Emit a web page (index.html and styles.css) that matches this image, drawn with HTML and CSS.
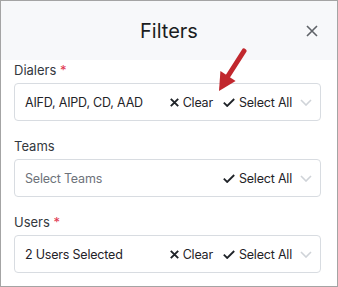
FILE: index.html
```html
<!DOCTYPE html>
<html lang="en">
<head>
  <meta charset="UTF-8">
  <title>Filters</title>
  <link rel="stylesheet" href="styles.css">
</head>
<body>
  <div class="modal">
    <div class="modal-header">
      <h2>Filters</h2>
      <button class="close" aria-label="Close">
        <svg width="12" height="12" viewBox="0 0 12 12"><path d="M1 1L11 11M11 1L1 11" stroke="#5f6368" stroke-width="1.6" fill="none"/></svg>
      </button>
    </div>

    <div class="modal-body">
      <div class="field">
        <label>Dialers <span class="req">*</span></label>
        <div class="select">
          <span class="value">AIFD, AIPD, CD, AAD</span>
          <span class="action"><svg class="x" width="9" height="9" viewBox="0 0 9 9"><path d="M0.8 0.8L8.2 8.2M8.2 0.8L0.8 8.2" stroke="#1f2328" stroke-width="1.9" fill="none"/></svg>Clear</span>
          <span class="action"><svg class="check" width="12" height="9" viewBox="0 0 12 9"><path d="M0.8 4.6L4.2 8L11.2 1" stroke="#1f2328" stroke-width="1.8" fill="none"/></svg>Select All</span>
          <svg class="chevron" width="12" height="7" viewBox="0 0 12 7"><path d="M1 1L6 6L11 1" stroke="#cfd3d8" stroke-width="1.6" fill="none"/></svg>
        </div>
      </div>

      <div class="field">
        <label>Teams</label>
        <div class="select">
          <span class="value placeholder">Select Teams</span>
          <span class="action"><svg class="check" width="12" height="9" viewBox="0 0 12 9"><path d="M0.8 4.6L4.2 8L11.2 1" stroke="#1f2328" stroke-width="1.8" fill="none"/></svg>Select All</span>
          <svg class="chevron" width="12" height="7" viewBox="0 0 12 7"><path d="M1 1L6 6L11 1" stroke="#cfd3d8" stroke-width="1.6" fill="none"/></svg>
        </div>
      </div>

      <div class="field">
        <label>Users <span class="req">*</span></label>
        <div class="select">
          <span class="value">2 Users Selected</span>
          <span class="action"><svg class="x" width="9" height="9" viewBox="0 0 9 9"><path d="M0.8 0.8L8.2 8.2M8.2 0.8L0.8 8.2" stroke="#1f2328" stroke-width="1.9" fill="none"/></svg>Clear</span>
          <span class="action"><svg class="check" width="12" height="9" viewBox="0 0 12 9"><path d="M0.8 4.6L4.2 8L11.2 1" stroke="#1f2328" stroke-width="1.8" fill="none"/></svg>Select All</span>
          <svg class="chevron" width="12" height="7" viewBox="0 0 12 7"><path d="M1 1L6 6L11 1" stroke="#cfd3d8" stroke-width="1.6" fill="none"/></svg>
        </div>
      </div>
    </div>

    <!-- callout arrow pointing at the Clear button -->
    <svg class="callout" width="34" height="50" viewBox="0 0 34 50">
      <line x1="29" y1="6" x2="13" y2="31" stroke="#c1272d" stroke-width="5" stroke-linecap="round"/>
      <polygon points="4,46 5.4,26 20.6,36" fill="#c1272d"/>
    </svg>
  </div>
</body>
</html>
```

FILE: styles.css
```css
* {
  margin: 0;
  padding: 0;
  box-sizing: border-box;
}

body {
  font-family: Inter, "Noto Sans", sans-serif;
  background: #fff;
  color: #1f2328;
}

.modal {
  position: relative;
  width: 338px;
  height: 287px;
  border: 1px solid #a4a4a4;
  background: #fff;
  overflow: hidden;
}

.modal-header {
  position: relative;
  height: 59px;
  background: #f7f8fa;
  display: flex;
  align-items: center;
  justify-content: center;
}

.modal-header h2 {
  font-size: 20px;
  font-weight: 400;
  color: #1a1d21;
  margin-top: 1px;
}

.close {
  position: absolute;
  right: 19px;
  top: 24px;
  border: none;
  background: none;
  display: flex;
}

.modal-body {
  padding: 1px 16px 0 13px;
}

.field {
  margin-bottom: 16px;
}

.field label {
  display: block;
  font-size: 13px;
  line-height: 18px;
  color: #33383e;
  margin-bottom: 4px;
}

.req {
  color: #e0364f;
}

.select {
  display: flex;
  align-items: center;
  height: 38px;
  border: 1px solid #d8dce1;
  border-radius: 4px;
  padding: 0 8px 0 10px;
  font-size: 12.5px;
  letter-spacing: -0.2px;
  color: #1f2328;
}

.value {
  flex: 1;
}

.placeholder {
  color: #6d727a;
}

.action {
  display: flex;
  align-items: center;
  margin-left: 10px;
  color: #1f2328;
}

.action .x {
  margin-right: 4px;
}

.action .check {
  margin-right: 4px;
}

.chevron {
  margin-left: 8px;
}

.callout {
  position: absolute;
  left: 214px;
  top: 44px;
}
```
